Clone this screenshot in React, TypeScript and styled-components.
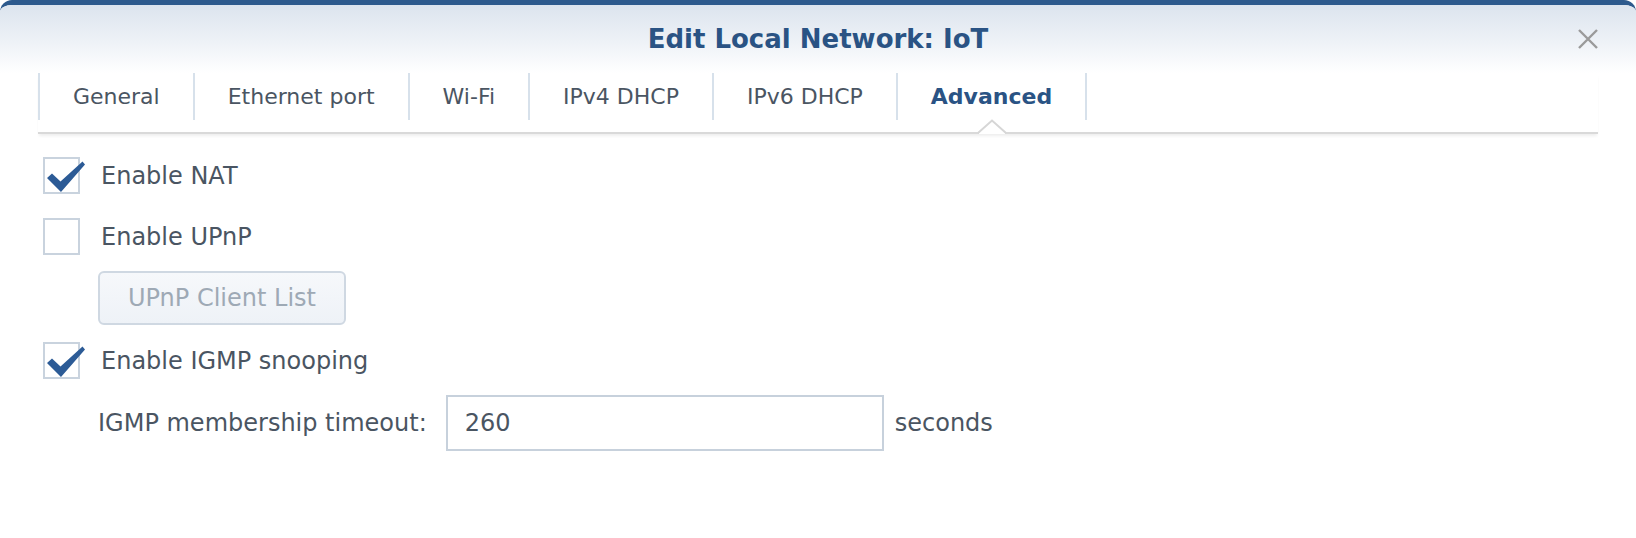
import React from "react";
import styled, { createGlobalStyle, css } from "styled-components";

const GlobalStyle = createGlobalStyle`
    html, body {
        margin: 0;
        padding: 0;
        background: #ffffff;
    }
    body {
        font-family: "DejaVu Sans", Verdana, sans-serif;
        color: #4a5562;
    }
`;

const Dialog = styled.div`
    width: 1636px;
    height: 538px;
    box-sizing: border-box;
    border-top: 5px solid #2d5a8d;
    border-radius: 12px 12px 0 0;
    background: #ffffff;
    overflow: hidden;
`;

const Header = styled.div`
    display: grid;
    grid-template-columns: 1fr auto 1fr;
    align-items: center;
    height: 68px;
    background: linear-gradient(to bottom, #dce4ee 0%, #eef2f7 55%, #ffffff 100%);
`;

const Title = styled.div`
    grid-column: 2;
    font-size: 26px;
    font-weight: 700;
    color: #2a5384;
    white-space: nowrap;
`;

const CloseButton = styled.button`
    grid-column: 3;
    justify-self: end;
    margin-right: 38px;
    width: 20px;
    height: 20px;
    padding: 0;
    border: none;
    background: none;
    display: flex;
    cursor: pointer;
`;

const TabStrip = styled.div`
    display: flex;
    margin: 0 38px;
    padding-bottom: 12px;
    border-bottom: 2px solid #d9d9d9;
    box-shadow: 0 3px 3px -1px rgba(0, 0, 0, 0.07);
`;

const Tab = styled.div<{ $active?: boolean }>`
    position: relative;
    display: flex;
    align-items: center;
    height: 47px;
    padding: 0 33px;
    border-left: 2px solid #d7e1eb;
    font-size: 22px;
    color: #4a5562;
    white-space: nowrap;

    &:last-child {
        border-right: 2px solid #d7e1eb;
    }

    ${(p) =>
        p.$active &&
        css`
            font-weight: 700;
            color: #2a5384;
        `}
`;

const Notch = styled.svg`
    position: absolute;
    top: 100%;
    left: 50%;
    transform: translateX(-50%);
    overflow: visible;
`;

const Body = styled.div`
    display: flex;
    flex-direction: column;
    align-items: flex-start;
    padding: 23px 0 0 43px;
    font-size: 24px;
`;

const CheckRow = styled.label<{ $gapAfter: number }>`
    display: flex;
    align-items: center;
    gap: 21px;
    height: 37px;
    margin-bottom: ${(p) => p.$gapAfter}px;
`;

const Box = styled.span`
    position: relative;
    width: 37px;
    height: 37px;
    box-sizing: border-box;
    border: 2px solid #c9d3de;
    background: #ffffff;
    flex-shrink: 0;
`;

const Tick = styled.svg`
    position: absolute;
    left: -2px;
    top: -2px;
    overflow: visible;
`;

const Indent = styled.div<{ $gapAfter: number }>`
    display: flex;
    align-items: center;
    padding-left: 55px;
    margin-bottom: ${(p) => p.$gapAfter}px;
`;

const GhostButton = styled.button`
    height: 54px;
    padding: 0 28px;
    border: 2px solid #cfd8e2;
    border-radius: 6px;
    background: linear-gradient(to bottom, #f6f8fb, #eef2f7);
    font-family: "DejaVu Sans", Verdana, sans-serif;
    font-size: 24px;
    color: #9ea9b5;
`;

const FieldLabel = styled.span`
    margin-right: 19px;
`;

const TextInput = styled.input`
    width: 438px;
    height: 56px;
    box-sizing: border-box;
    padding: 0 17px;
    border: 2px solid #c7d1dc;
    border-radius: 0;
    font-family: "DejaVu Sans", Verdana, sans-serif;
    font-size: 24px;
    color: #4a5562;
    outline: none;
`;

const Unit = styled.span`
    margin-left: 11px;
`;

const tabs = ["General", "Ethernet port", "Wi-Fi", "IPv4 DHCP", "IPv6 DHCP", "Advanced"];

function Checkbox({ checked }: { checked: boolean }) {
    return (
        <Box>
            {checked && (
                <Tick width="37" height="37" viewBox="0 0 37 37">
                    <path
                        d="M4 21 L9 16.5 L17.5 24.5 L39.5 4.5 L42 7.5 L18 35 Z"
                        fill="#2c5b96"
                    />
                </Tick>
            )}
        </Box>
    );
}

export default function App() {
    return (
        <>
            <GlobalStyle />
            <Dialog>
                <Header>
                    <Title>Edit Local Network: IoT</Title>
                    <CloseButton aria-label="Close">
                        <svg width="20" height="20" viewBox="0 0 20 20">
                            <path d="M1 1 L19 19 M19 1 L1 19" stroke="#9a9a9a" strokeWidth="2.4" />
                        </svg>
                    </CloseButton>
                </Header>
                <TabStrip>
                    {tabs.map((t) => (
                        <Tab key={t} $active={t === "Advanced"}>
                            {t}
                            {t === "Advanced" && (
                                <Notch width="26" height="14" viewBox="0 0 26 14">
                                    <path d="M0 14 L0 12.5 L13 0.5 L26 12.5 L26 14 Z" fill="#ffffff" />
                                    <path d="M-1 13 L13 0.5 L27 13" fill="none" stroke="#d6d6d6" strokeWidth="2" />
                                </Notch>
                            )}
                        </Tab>
                    ))}
                </TabStrip>
                <Body>
                    <CheckRow $gapAfter={24}>
                        <Checkbox checked />
                        Enable NAT
                    </CheckRow>
                    <CheckRow $gapAfter={16}>
                        <Checkbox checked={false} />
                        Enable UPnP
                    </CheckRow>
                    <Indent $gapAfter={17}>
                        <GhostButton disabled>UPnP Client List</GhostButton>
                    </Indent>
                    <CheckRow $gapAfter={16}>
                        <Checkbox checked />
                        Enable IGMP snooping
                    </CheckRow>
                    <Indent $gapAfter={0}>
                        <FieldLabel>IGMP membership timeout:</FieldLabel>
                        <TextInput defaultValue="260" />
                        <Unit>seconds</Unit>
                    </Indent>
                </Body>
            </Dialog>
        </>
    );
}
